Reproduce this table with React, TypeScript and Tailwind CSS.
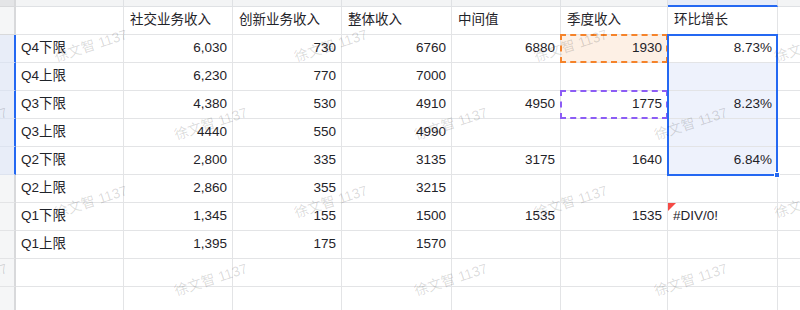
import React from "react";

const widths = ["w-[108px]", "w-[109px]", "w-[109px]", "w-[110px]", "w-[109px]", "w-[107px]", "w-[110px]"];

const header = ["", "社交业务收入", "创新业务收入", "整体收入", "中间值", "季度收入", "环比增长"];

const rows = [
  ["Q4下限", "6,030", "730", "6760", "6880", "1930", "8.73%"],
  ["Q4上限", "6,230", "770", "7000", "", "", ""],
  ["Q3下限", "4,380", "530", "4910", "4950", "1775", "8.23%"],
  ["Q3上限", "4440", "550", "4990", "", "", ""],
  ["Q2下限", "2,800", "335", "3135", "3175", "1640", "6.84%"],
  ["Q2上限", "2,860", "355", "3215", "", "", ""],
  ["Q1下限", "1,345", "155", "1500", "1535", "1535", "#DIV/0!"],
  ["Q1上限", "1,395", "175", "1570", "", "", ""],
  ["", "", "", "", "", "", ""],
  ["", "", "", "", "", "", ""],
];

// watermark centres, repeating every 240px across and ~78px down
const marks = [
  [91, 46], [331, 46], [571, 46], [811, 46],
  [-29, 124], [211, 124], [451, 124], [691, 124],
  [91, 202], [331, 202], [571, 202], [811, 202],
  [-29, 280], [211, 280], [451, 280], [691, 280],
];

function Cell({ row, col, value }: { row: number; col: number; value: string }) {
  const selected = col === 6 && row >= 1 && row <= 4;
  const isNumber = col > 0 && value !== "#DIV/0!";
  let extra = "";
  if (selected) extra = "bg-[#eef2fc]";
  if (row === 0 && col === 5) extra = "bg-[#fdf0e5]";

  return (
    <div
      className={`${widths[col]} relative flex h-[28px] shrink-0 items-center border-b border-r border-[#e3e4e6] px-[5px] ${
        isNumber ? "justify-end" : "justify-start"
      } ${extra}`}
    >
      {row === 0 && col === 5 && (
        <div className="absolute left-[-1px] top-[-1px] h-[29px] w-[108px] border-2 border-dashed border-[#f5832a]" />
      )}
      {row === 2 && col === 5 && (
        <div className="absolute left-[-1px] top-[-1px] h-[29px] w-[108px] border-2 border-dashed border-[#8c5cf5]" />
      )}
      {row === 6 && col === 6 && (
        <svg className="absolute left-0 top-0" width="8" height="8" viewBox="0 0 8 8">
          <polygon points="0,0 8,0 0,8" fill="#f54a45" />
        </svg>
      )}
      {row === 0 && col === 6 && (
        <div className="absolute left-[-1px] top-[-1px] z-10 h-[142px] w-[111px] border-2 border-[#2468f2]">
          <div className="absolute bottom-[-4px] right-[-4px] h-[6px] w-[6px] border border-white bg-[#2468f2]" />
        </div>
      )}
      <span className="relative">{value}</span>
    </div>
  );
}

export default function App() {
  return (
    <div
      className="relative h-[310px] w-[800px] overflow-hidden bg-white text-[13.5px] text-[#1f2329]"
      style={{ fontFamily: '"Liberation Sans", "Noto Sans CJK SC", sans-serif' }}
    >
      {/* column header strip */}
      <div className="flex h-[7px]">
        <div className="w-[16px] shrink-0 border-b border-r-2 border-[#d8d9db] bg-[#e4e5e7]" />
        {widths.map((w, i) => (
          <div
            key={i}
            className={`${w} shrink-0 border-r ${
              i === 6 ? "border-b-2 border-b-[#2468f2] border-r-[#dfe1e4] bg-[#e6ecf9]" : "border-b border-[#dfe1e4] bg-[#f3f4f5]"
            }`}
          />
        ))}
        <div className="flex-1 border-b border-[#dfe1e4] bg-[#f3f4f5]" />
      </div>

      {/* header labels */}
      <div className="flex">
        <div className="h-[28px] w-[16px] shrink-0 border-b border-r-2 border-[#d8d9db] bg-[#f5f6f7]" />
        {header.map((h, i) => (
          <div
            key={i}
            className={`${widths[i]} flex h-[28px] shrink-0 items-center border-b border-r border-[#e3e4e6] px-[6px]`}
          >
            {h}
          </div>
        ))}
        <div className="h-[28px] flex-1 border-b border-[#e3e4e6]" />
      </div>

      {rows.map((r, ri) => (
        <div key={ri} className="flex">
          <div
            className={`h-[28px] w-[16px] shrink-0 border-b border-r-2 ${
              ri <= 4 ? "border-b-[#dde3ef] border-r-[#2468f2] bg-[#e8edf8]" : "border-b-[#e3e4e6] border-r-[#d8d9db] bg-[#f5f6f7]"
            }`}
          />
          {r.map((v, ci) => (
            <Cell key={ci} row={ri} col={ci} value={v} />
          ))}
          <div className="h-[28px] flex-1 border-b border-[#e3e4e6]" />
        </div>
      ))}

      {/* watermark layer */}
      <div className="pointer-events-none absolute inset-0 z-20">
        {marks.map(([x, y], i) => (
          <span
            key={i}
            className="absolute -translate-x-1/2 -translate-y-1/2 -rotate-[18deg] whitespace-nowrap text-[14px] text-black/15"
            style={{ left: x, top: y }}
          >
            徐文智 1137
          </span>
        ))}
      </div>
    </div>
  );
}
